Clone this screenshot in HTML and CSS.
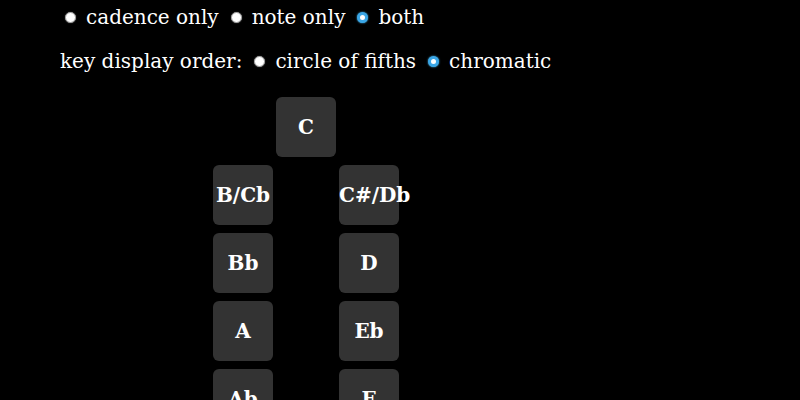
FILE: index.html
```html
<!DOCTYPE html>
<html>
<head>
<meta charset="utf-8">
<link rel="stylesheet" href="styles.css">
</head>
<body>
<div class="page">
  <div class="row mode">
    <label class="opt"><span class="radio"></span>cadence only</label>
    <label class="opt"><span class="radio"></span>note only</label>
    <label class="opt"><span class="radio on"></span>both</label>
  </div>
  <div class="row order">
    <span class="lbl">key display order:</span>
    <label class="opt"><span class="radio"></span>circle of fifths</label>
    <label class="opt"><span class="radio on"></span>chromatic</label>
  </div>
  <div class="keys">
    <div class="key c2">C</div>
    <div class="key c1">B/Cb</div>
    <div class="key c3">C#/Db</div>
    <div class="key c1">Bb</div>
    <div class="key c3">D</div>
    <div class="key c1">A</div>
    <div class="key c3">Eb</div>
    <div class="key c1">Ab</div>
    <div class="key c3">E</div>
    <div class="key c1">G</div>
    <div class="key c3">F</div>
    <div class="key c2">F#/Gb</div>
  </div>
</div>
</body>
</html>
```

FILE: styles.css
```css
html, body {
  margin: 0;
  background: #000;
}
body {
  font-family: "DejaVu Serif", serif;
  font-size: 20px;
  color: #fff;
  overflow: hidden;
}
.page {
  padding-left: 60px;
}
.row {
  display: flex;
  align-items: center;
  height: 24px;
  white-space: pre;
}
.mode {
  margin-top: 5px;
}
.order {
  margin-top: 20px;
}
.lbl {
  margin-right: 7px;
}
.opt {
  display: flex;
  align-items: center;
}
.radio {
  width: 11px;
  height: 11px;
  box-sizing: border-box;
  border-radius: 50%;
  background: #fff;
  border: 1px solid #999;
  box-shadow: 0 0 1px #888;
  margin: 0 10px 0 5px;
}
.opt + .opt .radio {
  margin-left: 12px;
}
.radio.on {
  background: #fff;
  border: 3px solid #3aa6e6;
  box-shadow: 0 0 2px #4ab8f0;
}
.keys {
  display: grid;
  grid-template-columns: repeat(3, 60px);
  column-gap: 3px;
  row-gap: 8px;
  margin: 24px 0 0 153px;
}
.key {
  height: 60px;
  background: #333;
  border-radius: 6px;
  font-weight: bold;
  font-size: 20px;
  line-height: 60px;
  text-align: center;
  white-space: nowrap;
}
.c1 { grid-column: 1; }
.c2 { grid-column: 2; }
.c3 { grid-column: 3; }
```
